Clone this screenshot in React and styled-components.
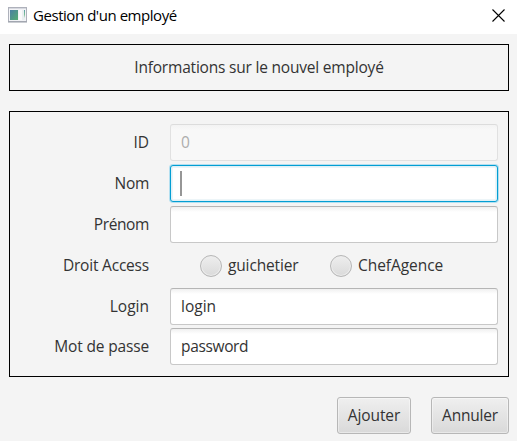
import React from "react";
import styled, { createGlobalStyle, css } from "styled-components";

const GlobalStyle = createGlobalStyle`
  * { box-sizing: border-box; }
  body {
    margin: 0;
    background: #f4f4f4;
    color: #333;
    font-family: "Open Sans", "Noto Sans", sans-serif;
    font-size: 15.5px;
    overflow: hidden;
  }
`;

const Window = styled.main`
  width: 517px;
  height: 441px;
  display: flex;
  flex-direction: column;
  background: #f4f4f4;
`;

const TitleBar = styled.header`
  height: 34px;
  flex: none;
  display: flex;
  align-items: center;
  padding: 0 12px 4px 8px;
  background: #fff;
  color: #000;
`;

const Title = styled.h1`
  flex: 1;
  margin: 0 0 0 6px;
  font-size: 15px;
  font-weight: 400;
  line-height: 20px;
`;

const CloseButton = styled.button`
  display: flex;
  padding: 0;
  border: 0;
  background: none;
`;

const Text = styled.span`
  white-space: nowrap;
  line-height: 20px;
  padding-bottom: 1px;
  letter-spacing: ${(p) => p.$tracking || 0}px;
`;

const Content = styled.div`
  flex: 1;
  padding: 10px 8px 7px 9px;
  display: flex;
  flex-direction: column;
`;

const Banner = styled.section`
  height: 47px;
  border: 1px solid #000;
  display: flex;
  align-items: center;
  justify-content: center;
`;

const Form = styled.section`
  height: 266px;
  margin-top: 20px;
  padding: 12px 10px 0 0;
  border: 1px solid #000;
  display: grid;
  grid-template-columns: 139px 328px;
  grid-template-rows: repeat(4, 37px) 36px 37px;
  column-gap: 21px;
  row-gap: 4px;
`;

const Label = styled.label`
  height: 37px;
  display: flex;
  align-items: center;
  justify-content: flex-end;
`;

const Field = styled.div`
  height: 37px;
  padding: 0 10px;
  display: flex;
  align-items: center;
  border: 1px solid #c8c8c8;
  border-top-color: #b5b5b5;
  border-radius: 3px;
  background: linear-gradient(#f0f0f0, #fff 5px);
  ${(p) => p.$disabled && css`
    border-color: #e1e1e1;
    border-top-color: #dcdcdc;
    background: linear-gradient(#f3f3f3, #f8f8f8 5px);
    color: #adadad;
  `}
  ${(p) => p.$focused && css`
    border-color: #039ed3;
    background: #fff;
    box-shadow: 0 0 0 1px #b3dff0, inset 0 0 0 1px #dff1f7, inset 0 0 0 2px #edf5f8;
  `}
`;

const Caret = styled.i`
  width: 2px;
  height: 25px;
  margin-left: -1px;
  background: #969696;
`;

const Options = styled.div`
  height: 37px;
  padding-left: 30px;
  display: grid;
  grid-template-columns: 130px 130px;
  align-items: center;
`;

const Option = styled.div`
  display: flex;
  align-items: center;
  gap: 6px;
`;

const Radio = styled.span`
  width: 22px;
  height: 22px;
  border: 1px solid #b7b7b7;
  border-radius: 50%;
  background: linear-gradient(#eee, #dadada);
  box-shadow: inset 0 0 0 1px #ececec;
`;

const Actions = styled.footer`
  margin-top: 20px;
  display: flex;
  justify-content: flex-end;
  gap: 20px;
`;

const Button = styled.button`
  width: ${(p) => p.$width}px;
  height: 37px;
  padding: 0;
  display: flex;
  align-items: center;
  justify-content: center;
  border: 1px solid #b7b7b7;
  border-radius: 3px;
  background: linear-gradient(#efefef, #d9d9d9);
  box-shadow: inset 0 0 0 1px rgba(255, 255, 255, 0.4);
  color: #333;
  font: inherit;
`;

const AppIcon = () => (
  <svg width="19" height="16" viewBox="0 0 19 16">
    <defs>
      <linearGradient id="pane" x1="0" y1="0" x2="1" y2="1">
        <stop offset="0" stopColor="#4a7fa3" />
        <stop offset="1" stopColor="#54ad72" />
      </linearGradient>
      <linearGradient id="edge" x1="0" y1="0" x2="0" y2="1">
        <stop offset="0" stopColor="#5a9fa5" />
        <stop offset="0.6" stopColor="#7fc096" />
        <stop offset="1" stopColor="#e6edef" />
      </linearGradient>
    </defs>
    <rect x="0.5" y="0.5" width="18" height="14" fill="#f2f3f6" stroke="#aeb1bb" />
    <path d="M0 15h19" stroke="#969ba5" />
    <path d="M1 1.5h17" stroke="#d6d8df" />
    <rect x="2" y="3" width="8" height="10" fill="url(#pane)" />
    <path d="M11 3h3v10h-3z" fill="#fafafb" />
    <path d="M14 3h3v10h-3z" fill="#e9eff1" />
    <rect x="16" y="3" width="1" height="8" fill="url(#edge)" />
  </svg>
);

const CloseIcon = () => (
  <svg width="13" height="13" viewBox="0 0 13 13">
    <path d="M.5.5l12 12M12.5.5l-12 12" stroke="#000" strokeWidth="1.1" fill="none" />
  </svg>
);

const Row = ({ label, tracking, children }) => (
  <>
    <Label><Text $tracking={tracking}>{label}</Text></Label>
    {children}
  </>
);

export default function App() {
  return (
    <>
      <GlobalStyle />
      <Window>
        <TitleBar>
          <AppIcon />
          <Title><Text $tracking={-0.45}>Gestion d'un employé</Text></Title>
          <CloseButton aria-label="Fermer"><CloseIcon /></CloseButton>
        </TitleBar>
        <Content>
          <Banner><Text $tracking={-0.2}>Informations sur le nouvel employé</Text></Banner>
          <Form>
            <Row label="ID"><Field $disabled><Text>0</Text></Field></Row>
            <Row label="Nom" tracking={-0.3}><Field $focused><Caret /></Field></Row>
            <Row label="Prénom" tracking={-0.4}><Field /></Row>
            <Row label="Droit Access" tracking={-0.2}>
              <Options>
                <Option><Radio /><Text $tracking={-0.15}>guichetier</Text></Option>
                <Option><Radio /><Text $tracking={-0.05}>ChefAgence</Text></Option>
              </Options>
            </Row>
            <Row label="Login"><Field><Text>login</Text></Field></Row>
            <Row label="Mot de passe" tracking={-0.15}><Field><Text $tracking={-0.35}>password</Text></Field></Row>
          </Form>
          <Actions>
            <Button $width={74}><Text $tracking={-0.1}>Ajouter</Text></Button>
            <Button $width={78}><Text $tracking={-0.2}>Annuler</Text></Button>
          </Actions>
        </Content>
      </Window>
    </>
  );
}
